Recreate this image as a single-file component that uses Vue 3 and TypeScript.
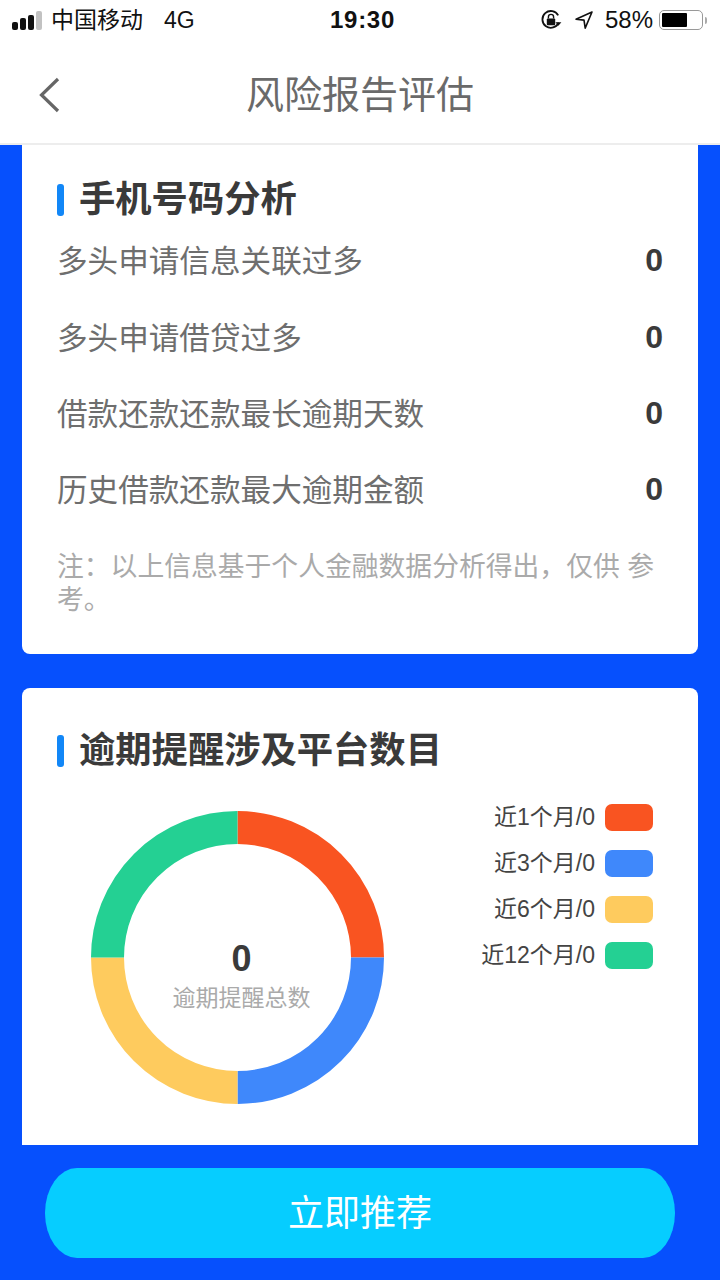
<template>
  <div class="page">
    <header class="status-bar">
      <div class="status-left">
        <span class="signal" aria-hidden="true">
          <i class="bar b1" /><i class="bar b2" /><i class="bar b3" /><i class="bar b4" />
        </span>
        <span class="carrier">中国移动</span>
        <span class="net">4G</span>
      </div>
      <div class="status-time">19:30</div>
      <div class="status-right">
        <svg class="lock" width="22" height="22" viewBox="0 0 22 22" fill="none" aria-hidden="true">
          <path d="M18.6 13.6A8.4 8.4 0 1 1 18.2 6.4" stroke="#111" stroke-width="1.8" />
          <path d="M15.4 13.2h6l-3 3.6z" fill="#111" />
          <rect x="6.8" y="9.6" width="8.4" height="6.6" rx="1" fill="#111" />
          <path d="M8.4 9.6V8a2.6 2.6 0 0 1 5.2 0v1.6" stroke="#111" stroke-width="1.4" />
        </svg>
        <svg class="arrow" width="20" height="20" viewBox="0 0 20 20" fill="none" aria-hidden="true">
          <path d="M18 2 2 9.2l8 .9 1.2 8z" stroke="#111" stroke-width="1.6" stroke-linejoin="round" />
        </svg>
        <span class="pct">58%</span>
        <span class="battery" aria-hidden="true"><i class="battery-fill" /></span>
        <span class="battery-tip" aria-hidden="true" />
      </div>
    </header>

    <nav class="nav">
      <svg class="back" width="24" height="36" viewBox="0 0 24 36" fill="none" aria-hidden="true">
        <path d="M20 2 3.5 18 20 34" stroke="#666" stroke-width="3.2" />
      </svg>
      <h1 class="nav-title">风险报告评估</h1>
    </nav>

    <main class="content">
      <section class="card card-top">
        <h2 class="card-title">手机号码分析</h2>
        <ul class="rows">
          <li v-for="row in rows" :key="row" class="row">
            <span>{{ row }}</span>
            <b class="row-value">0</b>
          </li>
        </ul>
        <p class="note">{{ note }}</p>
      </section>

      <section class="card card-bottom">
        <h2 class="card-title">逾期提醒涉及平台数目</h2>
        <div class="chart-area">
          <div class="donut">
            <svg width="293" height="293" viewBox="0 0 293 293" aria-hidden="true">
              <path
                v-for="seg in segments"
                :key="seg.label"
                :d="seg.arc"
                :stroke="seg.color"
                stroke-width="33"
                fill="none"
              />
            </svg>
            <div class="donut-center">
              <b class="donut-num">0</b>
              <span class="donut-label">逾期提醒总数</span>
            </div>
          </div>
          <ul class="legend">
            <li v-for="seg in segments" :key="seg.label" class="legend-item">
              <span class="legend-text">{{ seg.label }}</span>
              <i class="swatch" :style="{ background: seg.color }" />
            </li>
          </ul>
        </div>
      </section>
    </main>

    <footer class="footer">
      <button type="button" class="cta">立即推荐</button>
    </footer>
  </div>
</template>

<script setup lang="ts">
const rows = [
  '多头申请信息关联过多',
  '多头申请借贷过多',
  '借款还款还款最长逾期天数',
  '历史借款还款最大逾期金额',
];

const note = '注\uFF1A以上信息基于个人金融数据分析得出\uFF0C仅供 参考。';

const segments = [
  { label: '近1个月/0', color: '#f95421', arc: 'M146.5 16.5A130 130 0 0 1 276.5 146.5' },
  { label: '近3个月/0', color: '#3f88fb', arc: 'M276.5 146.5A130 130 0 0 1 146.5 276.5' },
  { label: '近6个月/0', color: '#fecb5e', arc: 'M146.5 276.5A130 130 0 0 1 16.5 146.5' },
  { label: '近12个月/0', color: '#24d093', arc: 'M16.5 146.5A130 130 0 0 1 146.5 16.5' },
];
</script>

<style>
html,
body {
  margin: 0;
  background: #0650fd;
}
</style>

<style scoped>
.page {
  width: 720px;
  height: 1280px;
  display: flex;
  flex-direction: column;
  overflow: hidden;
  background: #0650fd;
  font-family: "Liberation Sans", "Noto Sans CJK SC", sans-serif;
  color: #333;
}

.status-bar {
  height: 40px;
  flex: none;
  display: grid;
  grid-template-columns: 1fr auto 1fr;
  align-items: center;
  background: #fff;
  color: #111;
  font-size: 23px;
}

.status-left {
  display: flex;
  align-items: center;
  padding-left: 12px;
  gap: 7px;
}

.carrier {
  margin-bottom: 4px;
}

.signal {
  display: flex;
  align-items: flex-end;
  gap: 2px;
  width: 32px;
}

.bar {
  display: block;
  width: 6px;
  border-radius: 2px;
  background: #111;
}

.b1 { height: 8px; }
.b2 { height: 12px; }
.b3 { height: 15px; }
.b4 { height: 19px; background: #c2c2c2; }

.net {
  margin-left: 14px;
  font-size: 23px;
}

.status-time {
  padding-left: 5px;
  font-size: 24px;
  font-weight: 700;
  letter-spacing: 0.7px;
}

.status-right {
  display: flex;
  align-items: center;
  justify-content: flex-end;
  padding-right: 13px;
}

.lock {
  margin-right: 12px;
}

.arrow {
  margin-right: 11px;
}

.pct {
  margin-right: 6px;
  font-size: 24px;
}

.battery {
  width: 44px;
  height: 20px;
  box-sizing: border-box;
  border: 1.5px solid #999;
  border-radius: 5px;
  padding: 2px;
  display: block;
}

.battery-fill {
  display: block;
  width: 25px;
  height: 100%;
  background: #000;
  border-radius: 1px;
}

.battery-tip {
  width: 2px;
  height: 7px;
  margin-left: 2px;
  background: #aaa;
  border-radius: 0 2px 2px 0;
}

.nav {
  position: relative;
  height: 105px;
  flex: none;
  box-sizing: border-box;
  display: flex;
  align-items: center;
  justify-content: center;
  background: #fff;
  border-bottom: 2px solid #ededed;
}

.back {
  position: absolute;
  left: 38px;
  top: 37px;
}

.nav-title {
  margin: 0;
  font-size: 38px;
  font-weight: 400;
  color: #6a6a6a;
}

.content {
  flex: 1;
  min-height: 0;
  display: flex;
  flex-direction: column;
  gap: 34px;
  padding: 0 22px;
}

.card {
  background: #fff;
}

.card-top {
  height: 509px;
  box-sizing: border-box;
  padding: 33px 35px 0;
  border-radius: 0 0 8px 8px;
}

.card-bottom {
  flex: 1;
  padding: 41px 35px 0;
  border-radius: 8px 8px 0 0;
}

.card-title {
  position: relative;
  margin: 0;
  padding-left: 22px;
  font-size: 36.3px;
  line-height: 44px;
  font-weight: 700;
  color: #3a3a3a;
}

.card-title::before {
  content: "";
  position: absolute;
  left: 0;
  top: 6px;
  width: 7px;
  height: 32px;
  border-radius: 3px;
  background: #1287f7;
}

.rows {
  margin: -1px 0 0;
  padding: 0;
  list-style: none;
}

.row {
  height: 76.4px;
  display: flex;
  align-items: center;
  justify-content: space-between;
  font-size: 30.6px;
  color: #6e6e6e;
}

.row-value {
  margin-top: 3px;
  color: #3a3a3a;
  font-size: 32px;
}

.note {
  margin: 24px 0 0;
  font-size: 26.8px;
  line-height: 33px;
  color: #aaa;
}

.chart-area {
  display: flex;
  justify-content: space-between;
  align-items: flex-start;
  margin-top: 36px;
}

.donut {
  position: relative;
  width: 293px;
  height: 293px;
  margin: 2px 0 0 34px;
}

.donut svg {
  display: block;
}

.donut-center {
  position: absolute;
  inset: 0;
  box-sizing: border-box;
  padding: 40px 0 0 8px;
  display: flex;
  flex-direction: column;
  align-items: center;
  justify-content: center;
}

.donut-num {
  font-size: 36px;
  line-height: 40px;
  color: #3a3a3a;
}

.donut-label {
  font-size: 23px;
  line-height: 38px;
  color: #aaa;
}

.legend {
  margin: -5px 10px 0 0;
  padding: 0;
  list-style: none;
  display: flex;
  flex-direction: column;
  align-items: flex-end;
  gap: 19px;
}

.legend-item {
  display: flex;
  align-items: center;
  gap: 10px;
  font-size: 23px;
  color: #444;
}

.legend-text {
  line-height: 27px;
}

.swatch {
  display: block;
  width: 48px;
  height: 27px;
  border-radius: 7px;
}

.footer {
  height: 135px;
  flex: none;
  box-sizing: border-box;
  padding: 23px 45px 22px;
}

.cta {
  display: block;
  width: 100%;
  height: 90px;
  padding: 0 0 6px;
  border: 0;
  border-radius: 32px / 45px;
  background: #06cdff;
  color: #fff;
  font-family: inherit;
  font-size: 36px;
}
</style>
